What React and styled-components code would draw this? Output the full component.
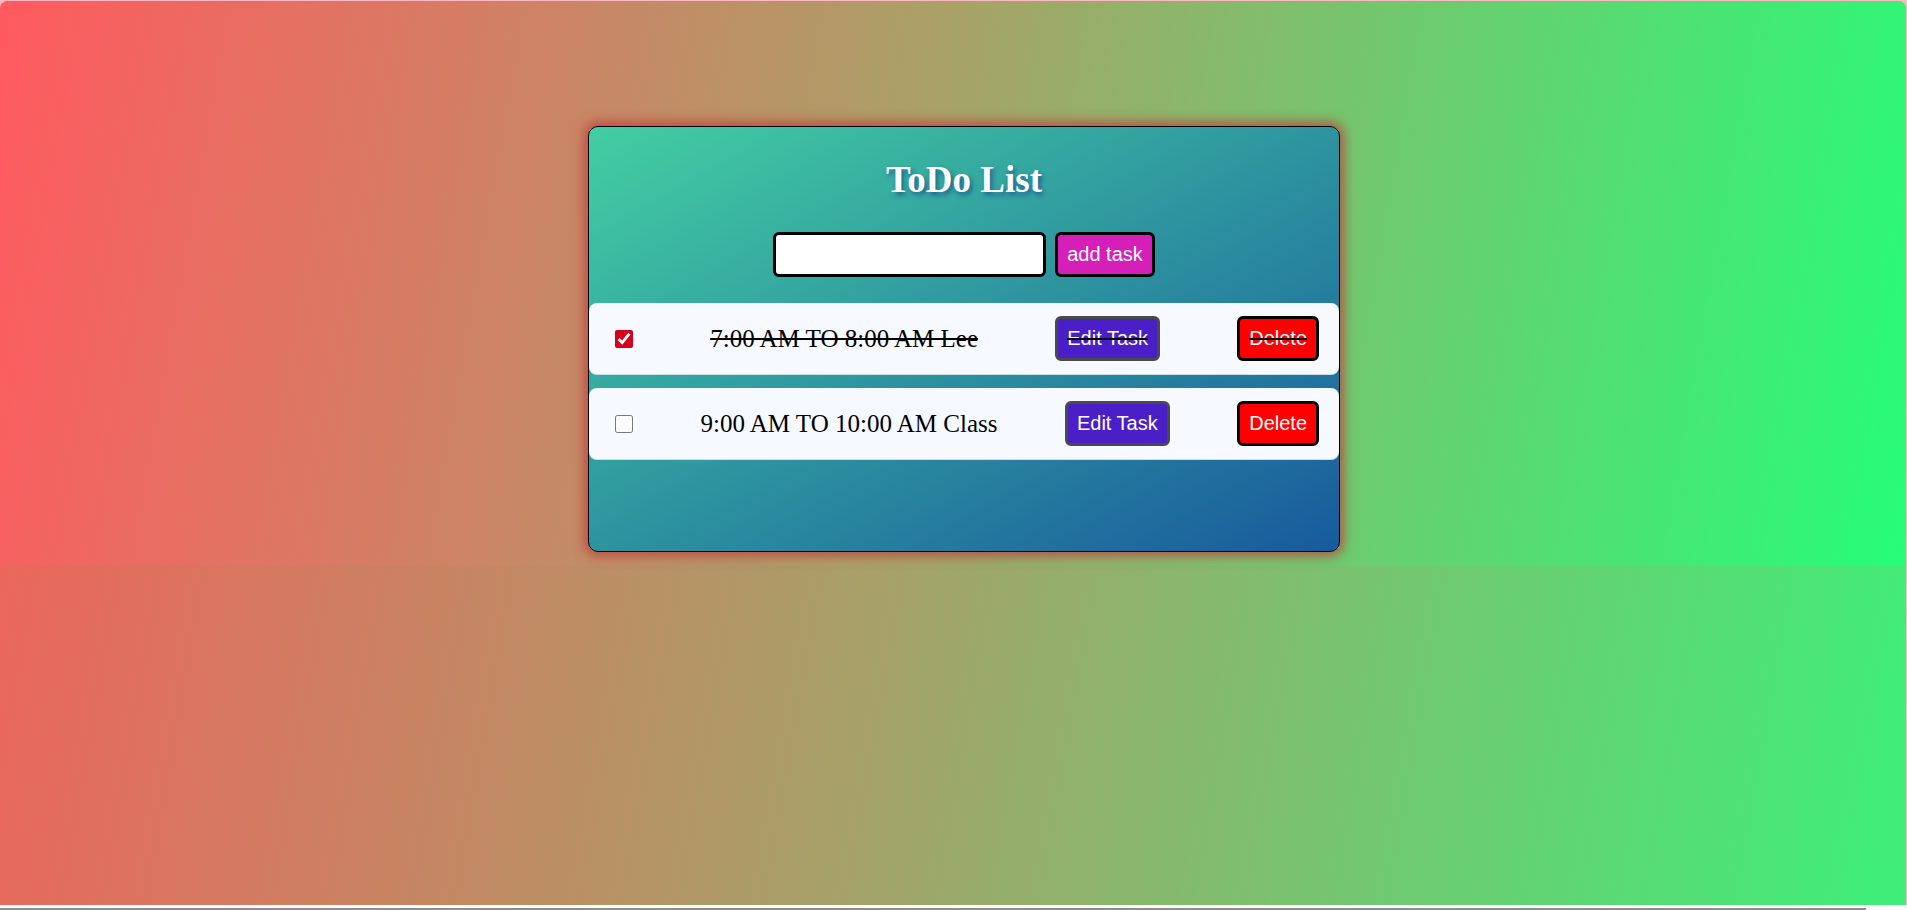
import React, { useState } from 'react';
import styled, { createGlobalStyle } from 'styled-components';

const GlobalStyle = createGlobalStyle`
  html, body {
    margin: 0;
    padding: 0;
    background: #ffffff;
    font-family: "Liberation Serif", "Times New Roman", serif;
    overflow: hidden;
  }
`;

const Page = styled.div`
  height: 910px;
  display: flex;
  flex-direction: column;
`;

const Frame = styled.div`
  height: 905px;
  box-sizing: border-box;
  padding: 1px 1px 0 0;
  background: #ffb8c6;
`;

const Backdrop = styled.div`
  height: 100%;
  display: flex;
  flex-direction: column;
  border-radius: 8px 8px 0 0;
  background: linear-gradient(100deg, #f2605a 0%, #a6a168 48%, #3def79 100%);
`;

const Hero = styled.div`
  height: 565px;
  box-sizing: border-box;
  display: flex;
  justify-content: center;
  align-items: flex-start;
  padding: 125px 0 0 22px;
  border-radius: 8px 8px 0 0;
  background: linear-gradient(100deg, #ff5a5f 0%, #a8a268 48%, #26fd78 100%);
`;

const ScrollTrack = styled.div`
  height: 5px;
  padding-top: 3px;
  box-sizing: border-box;
  background: #fff;
`;

const ScrollThumb = styled.div`
  width: 1866px;
  height: 2px;
  background: #8c8c8c;
`;

const Card = styled.div`
  width: 750px;
  padding: 32px 0 91px;
  border: 1px solid #000;
  border-radius: 10px;
  background: linear-gradient(to bottom right, #43cea2, #185a9d);
  box-shadow: 0 0 12px 4px rgba(190, 60, 60, 0.8);
`;

const Title = styled.h1`
  margin: 0;
  font-size: 37px;
  line-height: 42px;
  font-weight: bold;
  text-align: center;
  color: #fff;
  text-shadow: 2px 3px 5px #1d5d8c;
`;

const Form = styled.div`
  margin-top: 31px;
  display: flex;
  justify-content: center;
  gap: 9px;
`;

const Input = styled.input`
  width: 273px;
  height: 45px;
  box-sizing: border-box;
  border: 3px solid #000;
  border-radius: 6px;
  background: #fff;
  outline: none;
`;

const Button = styled.button`
  height: 45px;
  box-sizing: border-box;
  padding: 0 9px;
  border: 3px solid ${props => props.$edge || '#000'};
  border-radius: 6px;
  background: ${props => props.$bg};
  color: #fff;
  font-family: "Liberation Sans", Arial, sans-serif;
  font-size: 20px;
  cursor: pointer;
`;

const List = styled.ul`
  margin: 26px 0 0;
  padding: 0;
  list-style: none;
  display: flex;
  flex-direction: column;
  gap: 13px;
`;

const Row = styled.li`
  height: 72px;
  box-sizing: border-box;
  display: flex;
  align-items: center;
  justify-content: space-between;
  padding: 0 20px 0 26px;
  border-radius: 8px;
  border-bottom: 1px solid #c9dfe6;
  background: #f6f9ff;
  color: #000;
  text-decoration: ${props => props.$done ? 'line-through' : 'none'};
`;

const Check = styled.input`
  width: 18px;
  height: 18px;
  margin: 0;
  accent-color: #d6001c;
`;

const TaskText = styled.span`
  font-size: 25px;
`;

const initialTasks = [
  { id: 1, text: '7:00 AM TO 8:00 AM Lee', done: true },
  { id: 2, text: '9:00 AM TO 10:00 AM Class', done: false },
];

export default function App() {
  const [tasks, setTasks] = useState(initialTasks);
  const [value, setValue] = useState('');

  const toggle = id =>
    setTasks(list => list.map(t => (t.id === id ? { ...t, done: !t.done } : t)));

  const remove = id => setTasks(list => list.filter(t => t.id !== id));

  const add = () => {
    if (!value.trim()) return;
    setTasks(list => [...list, { id: Date.now(), text: value, done: false }]);
    setValue('');
  };

  return (
    <Page>
      <GlobalStyle />
      <Frame>
        <Backdrop>
          <Hero>
            <Card>
              <Title>ToDo List</Title>
              <Form>
                <Input value={value} onChange={e => setValue(e.target.value)} />
                <Button $bg="#d61fb9" onClick={add}>add task</Button>
              </Form>
              <List>
                {tasks.map(task => (
                  <Row key={task.id} $done={task.done}>
                    <Check type="checkbox" checked={task.done} onChange={() => toggle(task.id)} />
                    <TaskText>{task.text}</TaskText>
                    <Button $bg="#4a1fc7" $edge="#4a4a4a">Edit Task</Button>
                    <Button $bg="#ff0000" onClick={() => remove(task.id)}>Delete</Button>
                  </Row>
                ))}
              </List>
            </Card>
          </Hero>
        </Backdrop>
      </Frame>
      <ScrollTrack>
        <ScrollThumb />
      </ScrollTrack>
    </Page>
  );
}
